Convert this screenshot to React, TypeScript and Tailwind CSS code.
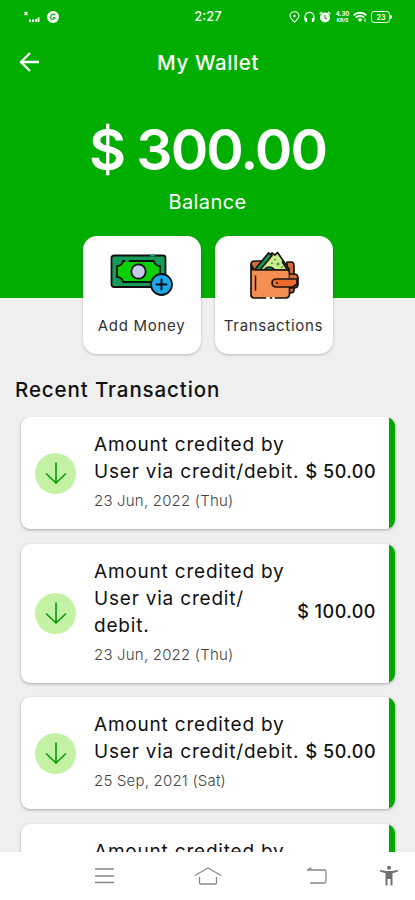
const transactions = [
  { id: 1, lines: ['Amount credited by', 'User via credit/debit.'], date: '23 Jun, 2022 (Thu)', amount: '$ 50.00' },
  { id: 2, lines: ['Amount credited by', 'User via credit/', 'debit.'], date: '23 Jun, 2022 (Thu)', amount: '$ 100.00' },
  { id: 3, lines: ['Amount credited by', 'User via credit/debit.'], date: '25 Sep, 2021 (Sat)', amount: '$ 50.00' },
  { id: 4, lines: ['Amount credited by', 'User via credit/debit.'], date: '25 Sep, 2021 (Sat)', amount: '$ 50.00' },
];

const StatusBar = () => (
  <div className="flex h-[34px] items-center justify-between pl-6 pr-[23px] text-white">
    <div className="flex w-[104px] items-center gap-[7px]">
      <svg width="16" height="12" viewBox="0 0 16 12" fill="none" stroke="currentColor">
        <path d="M.5 1l3 3M3.500 1l-3 3" strokeWidth="1.400" />
        <path d="M6 11V8.500M9 11V8.500M12 11V8M14.500 11V6.500" strokeWidth="2" />
      </svg>
      <svg width="12" height="12" viewBox="0 0 12 12" fill="none">
        <circle cx="6" cy="6" r="6" fill="#fff" />
        <path d="M8.200 3.800C6.500 2.400 3.600 3.600 3.600 6.200c0 2.600 4.300 2.800 4.300.3H6" stroke="#00ae00" strokeWidth="1.100" />
      </svg>
    </div>
    <span className="text-[13px] font-medium">2:27</span>
    <div className="flex w-[104px] items-center justify-end gap-[4px]">
      <svg width="11" height="12" viewBox="0 0 11 12" fill="none" stroke="currentColor">
        <path d="M5.500 11.200C3.500 9 1 7.500 1 5a4.500 4.300 0 0 1 9 0c0 2.500-2.500 4-4.500 6.200z" strokeWidth="1.100" />
        <circle cx="5.500" cy="5" r="1.200" fill="currentColor" stroke="none" />
      </svg>
      <svg width="11" height="12" viewBox="0 0 11 12" fill="none" stroke="currentColor">
        <path d="M1 9V5.800a4.500 4.500 0 0 1 9 0V9" strokeWidth="1.200" />
        <path d="M2 7v4M9 7v4" strokeWidth="2.200" />
      </svg>
      <svg width="12" height="12" viewBox="0 0 12 12" fill="none">
        <circle cx="6" cy="6.500" r="5" fill="#fff" />
        <path d="M.7 3L3 1M11.300 3L9 1" stroke="#fff" strokeWidth="1.500" />
        <path d="M6 4v3l1.800 1" stroke="#00ae00" strokeWidth="1.100" />
      </svg>
      <div className="flex w-[14px] flex-col items-center text-[6px] font-bold leading-[6px]">
        <span>4.30</span>
        <span className="text-[5px]">KB/S</span>
      </div>
      <svg width="14" height="12" viewBox="0 0 14 12" fill="none" stroke="currentColor">
        <path d="M.7 4.300a9 9 0 0 1 12.600 0M2.800 6.600a6 6 0 0 1 8.400 0" strokeWidth="1.900" />
        <path d="M7 11L4.600 8.500a3.500 3.500 0 0 1 4.800 0z" fill="currentColor" stroke="none" />
        <path d="M12 7.500v3.500" strokeWidth="1" />
      </svg>
      <div className="flex shrink-0 items-center">
        <div className="flex h-[12px] w-[19px] items-center justify-center rounded-[3px] border border-white/90">
          <span className="text-[7px] font-bold leading-none">23</span>
        </div>
        <div className="h-[4px] w-[1.5px] rounded-r bg-white" />
      </div>
    </div>
  </div>
);

const MoneyIcon = () => (
  <svg width="64" height="44" viewBox="0 0 64 44" fill="none" stroke="#111" strokeWidth="1.800" strokeLinecap="round" strokeLinejoin="round">
    <rect x="1.500" y="2.500" width="54" height="31.500" rx="2.500" fill="#159a5a" />
    <path d="M13 8h31c0 3 3 5 6 5v11c-3 0-6 2-6 5H13c0-3-3-5-6-5V13c3 0 6-2 6-5z" fill="#0bd006" />
    <circle cx="28.500" cy="18.500" r="7.200" fill="#c5cae9" />
    <path d="M41 2.500h3M16 8h2" stroke="#159a5a" strokeWidth="2.200" />
    <circle cx="51.500" cy="31.500" r="10.500" fill="#1ba9ec" />
    <path d="M51.500 26.500v10M46.500 31.500h10" strokeWidth="2" />
  </svg>
);

const WalletIcon = () => (
  <svg width="50" height="50" viewBox="0 0 50 50" fill="none" stroke="#171310" strokeWidth="1.700" strokeLinecap="round" strokeLinejoin="round">
    <path d="M38 12h4q3 0 3 4v24q0 3-4 3h-3z" fill="#ce6d3b" />
    <path d="M2 14.500q0-3.500 4-3.500h7v9H5z" fill="#ce6d3b" />
    <path d="M8 20L23 3l3 2 2.500-2.500L40 19v1z" fill="#c9ef8c" />
    <path d="M5.500 20L19.500 3l3.500 2.500L11 20z" fill="#149957" />
    <path d="M15 20q5-6 11 0zM33.500 12l5 8" fill="#149957" />
    <circle cx="29" cy="14" r="1.600" fill="#4a9e58" stroke="none" />
    <path d="M26 9.500v.5M23 13v.5M33 17v.5" strokeWidth="1" />
    <path d="M2 14.500V17q0 3 4 3h32q2.500 0 2.500 3v21q0 4-4 4H5q-3 0-3-3z" fill="#f58e52" />
    <path d="M40.500 24H45q4 0 4 4v6q0 4-4 4h-4.500" fill="#ce6d3b" />
    <path d="M48 29H27a4 4 0 0 0 0 8h17l4-3z" fill="#ed692d" />
    <path d="M27.500 33h1M6.500 26v14" strokeWidth="1.500" />
    <path d="M18 48h2M24 48h1" stroke="#fff" strokeWidth="2" />
  </svg>
);

const ActionCard = ({ icon, label }: { icon: React.ReactNode; label: string }) => (
  <div className="flex h-[118px] w-[118px] flex-col items-center rounded-[14px] bg-white pt-[14px] shadow-[0_1px_3px_rgba(0,0,0,0.22)]">
    <div className="flex h-[50px] items-center">{icon}</div>
    <span className="mt-[15px] whitespace-nowrap text-[15px] leading-[22px] tracking-[0.7px] text-[#333]">{label}</span>
  </div>
);

const TransactionCard = ({ lines, date, amount }: { lines: string[]; date: string; amount: string }) => (
  <div className="flex shrink-0 overflow-hidden rounded-[9px] bg-white shadow-[0_1px_3px_rgba(0,0,0,0.3)]">
    <div className="flex flex-1 items-center pl-[14px] pr-[13px]">
      <div className="flex h-[41px] w-[41px] shrink-0 items-center justify-center rounded-full bg-[#c3f2a5]">
        <svg width="22" height="24" viewBox="0 0 22 24" fill="none" stroke="#0aa00a" strokeWidth="1.700" strokeLinecap="round" strokeLinejoin="round">
          <path d="M11 2v20M1.500 13L11 22l9.500-9" />
        </svg>
      </div>
      <div className="ml-[18px] flex-1 pb-[13px] pt-[14px]">
        {lines.map((line) => (
          <p key={line} className="whitespace-nowrap text-[19px] leading-[27px] tracking-[0.8px] text-[#111]">{line}</p>
        ))}
        <p className="whitespace-nowrap text-[15px] font-light leading-[31px] tracking-[0.2px] text-[#444]">{date}</p>
      </div>
      <span className="-ml-10 whitespace-nowrap pb-1 text-[18px] font-medium tracking-[0.5px] text-[#111]">{amount}</span>
    </div>
    <div className="w-[6px] bg-[#00a800]" />
  </div>
);

const NavBar = () => (
  <div className="flex h-12 shrink-0 items-center bg-white pl-[94px] text-[#888]">
    <svg width="21" height="18" viewBox="0 0 21 18" stroke="currentColor" strokeWidth="1.300">
      <path d="M1 2h19M1 9h19M1 15.500h19" />
    </svg>
    <svg width="28" height="20" viewBox="0 0 28 20" fill="none" stroke="currentColor" strokeWidth="1.300" className="ml-[79px]">
      <path d="M1 9.500L14 2l13 7.500M5.500 11v6q0 1 1 1h15q1 0 1-1v-6" />
    </svg>
    <svg width="22" height="18" viewBox="0 0 22 18" fill="none" stroke="currentColor" strokeWidth="1.300" className="ml-[84px]">
      <path d="M1 3h17.500q1.500 0 1.500 1.500v10q0 1.500-1.500 1.500H4M5.500.8L1 3h4.500" />
    </svg>
    <svg width="20" height="22" viewBox="0 0 20 22" fill="#707070" className="ml-[51px]">
      <circle cx="10" cy="2.800" r="2" />
      <path d="M1 5l6.500 1h5L19 5v1.600l-5.500 1.600v12.300h-2V14h-3v6.500h-2V8.200L1 6.600z" />
    </svg>
  </div>
);

const App = () => {
  return (
    <div className="flex h-[900px] w-[415px] flex-col overflow-hidden bg-[#efefef] font-['Inter',sans-serif]">
      <header className="h-[298px] shrink-0 bg-[#00ae00] text-white">
        <StatusBar />
        <div className="flex h-14 items-center px-[19px]">
          <svg width="21" height="20" viewBox="0 0 21 20" fill="none" stroke="currentColor" strokeWidth="2.400">
            <path d="M20 10H2M11 1L2 10l9 9" />
          </svg>
          <h1 className="flex-1 pr-[20px] pt-[2px] text-center text-[20.5px] font-medium tracking-[0.6px]">My Wallet</h1>
        </div>
        <p className="mt-[24px] text-center text-[57px] font-semibold leading-[72px] tracking-[-2px]">$ 300.00</p>
        <p className="mt-[2px] text-center text-[20px] leading-[28px] tracking-[0.4px]">Balance</p>
      </header>

      <div className="-mt-[62px] flex shrink-0 justify-center gap-[14px]">
        <ActionCard icon={<MoneyIcon />} label="Add Money" />
        <ActionCard icon={<WalletIcon />} label="Transactions" />
      </div>

      <h2 className="mt-[22px] shrink-0 pl-[15px] text-[20.5px] font-medium leading-[28px] tracking-[0.9px] text-[#111]">Recent Transaction</h2>

      <div className="mt-[13px] flex min-h-0 flex-1 flex-col gap-[14.5px] overflow-hidden pl-[21px] pr-[20px]">
        {transactions.map((t) => (
          <TransactionCard key={t.id} lines={t.lines} date={t.date} amount={t.amount} />
        ))}
      </div>

      <NavBar />
    </div>
  );
};

export default App;
